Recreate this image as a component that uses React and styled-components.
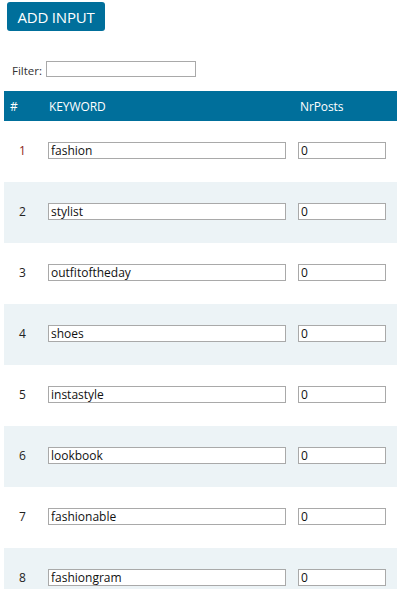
import React from "react";
import styled, { createGlobalStyle } from "styled-components";

const Global = createGlobalStyle`
  html, body { margin: 0; padding: 0; background: #fff; }
  body { font-family: "Open Sans", "Noto Sans", sans-serif; color: #222; overflow: hidden; }
`;

const Page = styled.div`
  width: 397px;
  padding-top: 2px;
`;

const AddButton = styled.button`
  margin-left: 7px;
  width: 98px;
  height: 29px;
  background: #006f9b;
  color: #fff;
  border: none;
  border-radius: 3px;
  font-family: "Open Sans", "Noto Sans", sans-serif;
  font-size: 15px;
  padding: 0;
  display: flex;
  align-items: center;
  justify-content: center;
  letter-spacing: -0.2px;
`;

const FilterRow = styled.div`
  display: flex;
  align-items: center;
  gap: 4px;
  margin: 32px 0 0 12px;
  font-size: 11.5px;
  color: #333;
`;

const FilterInput = styled.input`
  box-sizing: border-box;
  width: 150px;
  height: 16px;
  border: 1px solid #a9a9a9;
  padding: 0 3px;
  margin-top: -3px;
`;

const Table = styled.div`
  margin: 13px 0 0 4px;
  width: 393px;
`;

const Row = styled.div`
  display: grid;
  grid-template-columns: 41px 250px 1fr;
  height: ${(p) => (p.$head ? "30px" : "61px")};
  background: ${(p) => (p.$head ? "#006f9b" : p.$alt ? "#ecf3f6" : "#fff")};
  color: ${(p) => (p.$head ? "#fff" : "#222")};
  align-items: ${(p) => (p.$head ? "center" : "start")};
  font-size: 12px;
`;

const HeadCell = styled.div`
  padding-left: ${(p) => p.$pl}px;
  font-size: 12px;
  letter-spacing: -0.1px;
`;

const NumCell = styled.div`
  padding: 21px 0 0 15px;
  height: 17px;
  line-height: 17px;
  font-size: 12px;
  color: ${(p) => (p.$active ? "#8b1c1c" : "#222")};
`;

const InputCell = styled.div`
  padding: 21px 0 0 3px;
`;

const TextInput = styled.input`
  box-sizing: border-box;
  display: block;
  width: ${(p) => p.$w}px;
  height: 17px;
  border: 1px solid #a9a9a9;
  padding: 0 2px;
  font-family: "Open Sans", "Noto Sans", sans-serif;
  font-size: 12px;
  color: #111;
  background: #fff;
  outline: none;
`;

const keywords = [
  "fashion",
  "stylist",
  "outfitoftheday",
  "shoes",
  "instastyle",
  "lookbook",
  "fashionable",
  "fashiongram",
];

export default function App() {
  return (
    <Page>
      <Global />
      <AddButton>ADD INPUT</AddButton>
      <FilterRow>
        <span>Filter:</span>
        <FilterInput />
      </FilterRow>
      <Table>
        <Row $head>
          <HeadCell $pl={6}>#</HeadCell>
          <HeadCell $pl={4}>KEYWORD</HeadCell>
          <HeadCell $pl={5}>NrPosts</HeadCell>
        </Row>
        {keywords.map((k, i) => (
          <Row key={k} $alt={i % 2 === 1}>
            <NumCell $active={i === 0}>{i + 1}</NumCell>
            <InputCell>
              <TextInput $w={238} defaultValue={k} />
            </InputCell>
            <InputCell>
              <TextInput $w={88} defaultValue="0" />
            </InputCell>
          </Row>
        ))}
      </Table>
    </Page>
  );
}
